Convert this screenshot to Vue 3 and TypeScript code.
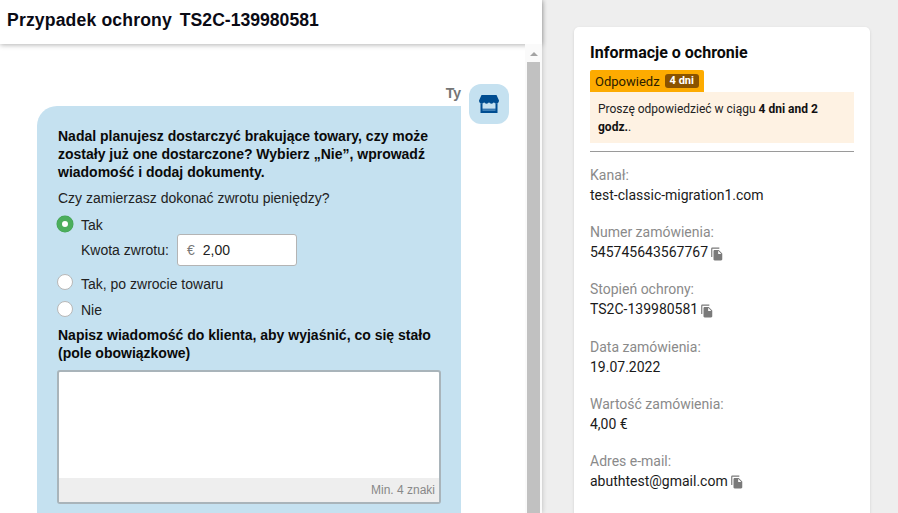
<script setup lang="ts">
interface Field { label: string; value: string; copy?: boolean }
const fields: Field[] = [
  { label: 'Kanał:', value: 'test-classic-migration1.com' },
  { label: 'Numer zamówienia:', value: '545745643567767', copy: true },
  { label: 'Stopień ochrony:', value: 'TS2C-139980581', copy: true },
  { label: 'Data zamówienia:', value: '19.07.2022' },
  { label: 'Wartość zamówienia:', value: '4,00 €' },
  { label: 'Adres e-mail:', value: 'abuthtest@gmail.com', copy: true },
]
</script>

<template>
  <div class="page">
    <section class="left">
      <header class="head"><span class="case">Przypadek ochrony</span><span>TS2C-139980581</span></header>
      <div class="scrollarea">
        <div class="chat">
          <div class="author">Ty</div>
          <div class="avatar">
            <svg viewBox="0 0 20 18" width="20" height="18">
              <path fill="#004d91" d="M2.500 0h15L20 5.500c0 1.900-1.200 3.200-2.700 3.200-1 0-1.900-.5-2.400-1.400-.5.900-1.400 1.400-2.450 1.400S10.500 8.200 10 7.300c-.5.900-1.400 1.400-2.450 1.400S5.600 8.200 5.100 7.300C4.600 8.200 3.700 8.700 2.700 8.700 1.200 8.700 0 7.400 0 5.500z" />
              <path fill="#004d91" d="M1.500 8.500h2V13h13V8.500h2V18h-17z" />
              <path fill="#8ab3d6" d="M3.500 13h13v1.200h-13z" />
              <path fill="#3f80b6" d="M3.500 14.200h13V16h-13z" />
            </svg>
          </div>
          <div class="bubble">
            <p class="strong q">Nadal planujesz dostarczyć brakujące towary, czy może zostały już one dostarczone? Wybierz „Nie”, wprowadź wiadomość i dodaj dokumenty.</p>
            <p class="ask">Czy zamierzasz dokonać zwrotu pieniędzy?</p>
            <div class="opt first"><span class="radio on"></span>Tak</div>
            <div class="amount">
              <span>Kwota zwrotu:</span>
              <div class="input"><span class="cur">€</span><span>2,00</span></div>
            </div>
            <div class="opt second"><span class="radio"></span>Tak, po zwrocie towaru</div>
            <div class="opt third"><span class="radio"></span>Nie</div>
            <p class="strong msg">Napisz wiadomość do klienta, aby wyjaśnić, co się stało (pole obowiązkowe)</p>
            <div class="area">
              <div class="blank"></div>
              <div class="counter">Min. 4 znaki</div>
            </div>
          </div>
        </div>
        <div class="scrollbar">
          <span class="arrow"></span>
          <span class="thumb"></span>
        </div>
      </div>
    </section>
    <aside class="right">
      <div class="card">
        <h2>Informacje o ochronie</h2>
        <div class="tag">Odpowiedz <span class="days">4 dni</span></div>
        <div class="notice">Proszę odpowiedzieć w ciągu <b>4 dni and 2 godz.</b>.</div>
        <hr />
        <div v-for="f in fields" :key="f.label" class="field">
          <div class="lab">{{ f.label }}</div>
          <div class="val">
            {{ f.value }}
            <svg v-if="f.copy" class="copy" viewBox="0 0 24 24" width="14" height="14">
              <path fill="#7a7a7a" d="M16 1H4c-1.100 0-2 .9-2 2v14h2V3h12V1zm-1 4l6 6v10c0 1.100-.9 2-2 2H7.990C6.890 23 6 22.100 6 21l.01-14c0-1.100.89-2 1.990-2h7zm-1 7h5.500L14 6.500V12z" />
            </svg>
          </div>
        </div>
      </div>
    </aside>
  </div>
</template>

<style scoped>
.page {
  display: flex;
  width: 898px;
  height: 513px;
  overflow: hidden;
  background: #eee;
  font-family: "Liberation Sans", Arial, sans-serif;
  color: #111;
}
.left {
  width: 542px;
  flex: none;
  display: flex;
  flex-direction: column;
  background: #fff;
  box-shadow: 0 0 5px rgba(0, 0, 0, 0.22);
  position: relative;
}
.head {
  height: 44px;
  padding: 0 0 4px 7px;
  box-sizing: border-box;
  display: flex;
  align-items: center;
  gap: 8px;
  font-size: 17.6px;
  font-weight: 700;
  background: #fff;
  color: #0a0a14;
  box-shadow: 0 1px 5px rgba(0, 0, 0, 0.3);
  position: relative;
  z-index: 1;
}
.case { letter-spacing: 0.15px; }
.scrollarea {
  flex: 1;
  display: flex;
  min-height: 0;
}
.chat {
  flex: 1;
  display: grid;
  grid-template-columns: 424px 40px;
  grid-template-rows: 22px auto;
  column-gap: 8px;
  padding: 40px 0 0 37px;
  align-content: start;
  overflow: hidden;
}
.author {
  grid-column: 1;
  grid-row: 1;
  text-align: right;
  font-size: 14px;
  font-weight: 700;
  color: #757575;
  padding-top: 1px;
}
.avatar {
  grid-column: 2;
  grid-row: 1 / span 2;
  width: 40px;
  height: 40px;
  border-radius: 12px;
  background: #c5e1f0;
  display: flex;
  align-items: center;
  justify-content: center;
}
.bubble {
  grid-column: 1;
  grid-row: 2;
  background: #c5e1f0;
  border-radius: 20px 0 0 0;
  padding: 21px 21px 40px 21px;
  font-size: 14px;
  height: 440px;
  box-sizing: border-box;
}
p { margin: 0; }
.strong { font-weight: 700; line-height: 18px; color: #0a0a0a; }
.ask { margin-top: 8px; line-height: 18px; color: #222; }
.opt {
  display: flex;
  align-items: center;
  gap: 8px;
  height: 18px;
  margin-left: -1px;
  color: #222;
}
.first { margin-top: 9px; }
.second { margin-top: 9px; }
.third { margin-top: 8px; }
.radio {
  width: 16px;
  height: 16px;
  border-radius: 50%;
  background: #fff;
  border: 1px solid #b8b8b8;
  box-sizing: border-box;
  position: relative;
  top: -1px;
}
.second .radio { top: -2px; }
.radio.on {
  border: 5px solid #4cae5c;
  box-shadow: 0 0 0 0.5px #3f9f4f;
}
.amount {
  display: flex;
  align-items: center;
  gap: 8px;
  margin-left: 23px;
  height: 32px;
  color: #222;
}
.input {
  width: 120px;
  height: 32px;
  box-sizing: border-box;
  background: #fff;
  border: 1px solid #b4b4b4;
  border-radius: 3px;
  display: flex;
  align-items: center;
  padding-left: 9px;
  gap: 8px;
  color: #222;
}
.cur { color: #777; }
.msg { margin-top: 7px; }
.area {
  margin: 8px 0 0 -1px;
  width: 384px;
  height: 134px;
  box-sizing: border-box;
  border: 2px solid #a9b4ba;
  border-radius: 3px;
  background: #fff;
  display: flex;
  flex-direction: column;
}
.blank { flex: 1; }
.counter {
  height: 24px;
  background: #eee;
  color: #888;
  font-size: 12px;
  line-height: 24px;
  text-align: right;
  padding-right: 4px;
}
.scrollbar {
  width: 17px;
  flex: none;
  background: #fafafa;
  display: flex;
  flex-direction: column;
  align-items: center;
  position: relative;
  z-index: 2;
}
.arrow {
  margin-top: 8px;
  width: 0;
  height: 0;
  border-left: 4px solid transparent;
  border-right: 4px solid transparent;
  border-bottom: 4px solid #a3a3a3;
}
.thumb {
  margin-top: 6px;
  width: 13px;
  flex: 1;
  background: #c1c1c1;
}
.right {
  flex: 1;
  padding: 27px 0 0 32px;
  font-family: Roboto, sans-serif;
}
.card {
  width: 296px;
  height: 520px;
  box-sizing: border-box;
  background: #fff;
  border-radius: 5px;
  padding: 16px 16px 0;
  box-shadow: 0 1px 3px rgba(0, 0, 0, 0.12);
}
h2 {
  margin: 0;
  font-size: 16px;
  font-weight: 700;
  line-height: 20px;
  color: #0a0a0a;
}
.tag {
  display: inline-flex;
  align-items: center;
  gap: 5px;
  margin-top: 7px;
  height: 22px;
  padding: 0 5px;
  background: #fdab00;
  border-radius: 2px 2px 0 0;
  font-size: 13px;
  color: #2b2000;
  vertical-align: top;
}
.days {
  background: #8a5300;
  color: #fff;
  font-size: 11px;
  font-weight: 700;
  padding: 1px 5px;
  border-radius: 3px;
  line-height: 12px;
}
.notice {
  background: #fef2e3;
  width: 264px;
  box-sizing: border-box;
  padding: 8px 8px 7px;
  font-size: 12px;
  line-height: 18px;
  color: #222;
}
.notice b { color: #111; }
hr {
  margin: 8px 0 0;
  border: 0;
  border-top: 1px solid #9a9a9a;
  width: 264px;
}
.field { margin-top: 13px; }
.field + .field { margin-top: 17.2px; }
.lab {
  font-size: 14px;
  line-height: 20px;
  color: #8a8a8a;
}
.val {
  font-size: 14px;
  line-height: 20px;
  color: #1a1a1a;
  display: flex;
  align-items: center;
  gap: 2px;
}
.copy { flex: none; margin-top: 3px; }
</style>
